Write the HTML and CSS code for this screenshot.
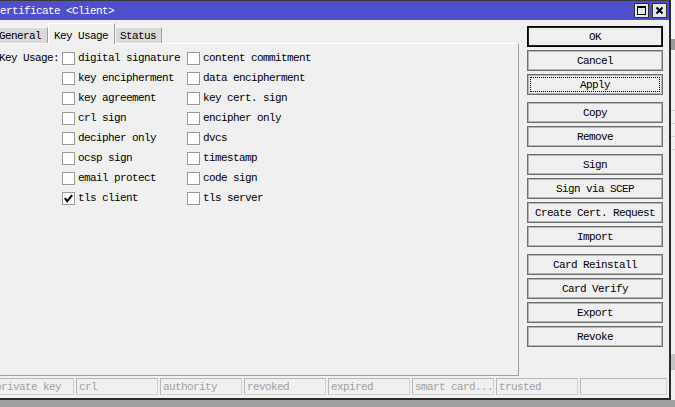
FILE: index.html
```html
<!DOCTYPE html>
<html>
<head>
<meta charset="utf-8">
<link rel="stylesheet" href="styles.css">
</head>
<body>
<div class="screen">
  <div class="top">
    <div class="window">
      <div class="titlebar">
        <span class="title">Certificate &lt;Client&gt;</span>
        <div class="tbtns">
          <span class="tbtn"><svg width="13" height="13" viewBox="0 0 13 13"><rect x="2.5" y="2.5" width="8" height="8" fill="none" stroke="#000" stroke-width="1"/><rect x="2" y="2" width="9" height="2" fill="#000"/></svg></span>
          <span class="tbtn"><svg width="13" height="13" viewBox="0 0 13 13"><path d="M3.5 3.5 L9.5 9.5 M9.5 3.5 L3.5 9.5" stroke="#000" stroke-width="2" fill="none"/></svg></span>
        </div>
      </div>
      <div class="wbody">
        <div class="main">
          <div class="left">
            <div class="tabs">
              <div class="tab tab-general">General</div>
              <div class="tab tab-key active">Key Usage</div>
              <div class="tab tab-status">Status</div>
            </div>
            <div class="panel">
              <div class="grid">
                <span class="lbl">Key Usage:</span>
                <label class="cb c1"><span class="box"></span>digital signature</label>
                <label class="cb c2"><span class="box"></span>content commitment</label>
                <label class="cb c1"><span class="box"></span>key encipherment</label>
                <label class="cb c2"><span class="box"></span>data encipherment</label>
                <label class="cb c1"><span class="box"></span>key agreement</label>
                <label class="cb c2"><span class="box"></span>key cert. sign</label>
                <label class="cb c1"><span class="box"></span>crl sign</label>
                <label class="cb c2"><span class="box"></span>encipher only</label>
                <label class="cb c1"><span class="box"></span>decipher only</label>
                <label class="cb c2"><span class="box"></span>dvcs</label>
                <label class="cb c1"><span class="box"></span>ocsp sign</label>
                <label class="cb c2"><span class="box"></span>timestamp</label>
                <label class="cb c1"><span class="box"></span>email protect</label>
                <label class="cb c2"><span class="box"></span>code sign</label>
                <label class="cb c1"><span class="box"><svg width="11" height="11" viewBox="0 0 11 11"><path d="M1.8 5.2 L4.2 8.2 L9.2 2.2" stroke="#000" stroke-width="2" fill="none"/></svg></span>tls client</label>
                <label class="cb c2"><span class="box"></span>tls server</label>
              </div>
            </div>
          </div>
          <div class="buttons">
            <div class="btn default">OK</div>
            <div class="btn">Cancel</div>
            <div class="btn focus">Apply</div>
            <div class="btn sep">Copy</div>
            <div class="btn">Remove</div>
            <div class="btn sep">Sign</div>
            <div class="btn">Sign via SCEP</div>
            <div class="btn">Create Cert. Request</div>
            <div class="btn">Import</div>
            <div class="btn sep">Card Reinstall</div>
            <div class="btn">Card Verify</div>
            <div class="btn">Export</div>
            <div class="btn">Revoke</div>
          </div>
        </div>
        <div class="status">
          <div class="sbox">private key</div>
          <div class="sbox">crl</div>
          <div class="sbox">authority</div>
          <div class="sbox">revoked</div>
          <div class="sbox">expired</div>
          <div class="sbox">smart card...</div>
          <div class="sbox">trusted</div>
          <div class="sbox last"></div>
        </div>
      </div>
    </div>
    <div class="behind">
      <div class="b-top"></div>
      <div class="b-head"></div>
      <div class="b-rows">
        <div class="b-row"></div>
        <div class="b-row"></div>
        <div class="b-row"></div>
        <div class="b-row"></div>
      </div>
      <div class="b-fill"></div>
      <div class="b-bar"></div>
      <div class="b-end"></div>
    </div>
  </div>
  <div class="bottom"></div>
</div>
</body>
</html>
```

FILE: styles.css
```css
html, body {
  margin: 0;
  padding: 0;
  background: #a0a0a0;
}

.screen {
  width: 675px;
  height: 407px;
  overflow: hidden;
  font-family: "Liberation Mono", "DejaVu Sans Mono", monospace;
  font-size: 11px;
  letter-spacing: -0.6px;
  color: #000;
}

.top {
  display: flex;
  height: 400px;
}

.window {
  flex: none;
  margin-left: -10px;
  width: 681px;
  height: 400px;
  box-sizing: border-box;
  border-top: 1px solid #3a3a3a;
  border-right: 2px solid #2a2a2a;
  border-bottom: 2px solid #2a2a2a;
  background: #f0f0f0;
  display: flex;
  flex-direction: column;
}

.titlebar {
  height: 19px;
  flex: none;
  background: #4f4fcd;
  display: flex;
  align-items: center;
  justify-content: space-between;
  padding: 0 2px 0 4px;
}

.title {
  color: #fff;
  white-space: pre;
}

.tbtns {
  display: flex;
  gap: 3px;
}

.tbtn {
  width: 15px;
  height: 15px;
  box-sizing: border-box;
  border: 1px solid #303030;
  background: #e6e6e6;
  display: flex;
  align-items: center;
  justify-content: center;
}

.tbtn svg {
  display: block;
}

.wbody {
  flex: 1;
  display: flex;
  flex-direction: column;
}

.main {
  display: flex;
  height: 356px;
}

.left {
  width: 529px;
  flex: none;
  display: flex;
  flex-direction: column;
}

.tabs {
  height: 23px;
  flex: none;
  display: flex;
  align-items: flex-end;
  padding-left: 4px;
}

.tab {
  height: 16px;
  box-sizing: border-box;
  background: #d9d9d9;
  border-top: 1px solid #f4f4f4;
  border-left: 1px solid #f4f4f4;
  border-right: 1px solid #a0a0a0;
  padding-left: 4px;
  display: flex;
  align-items: center;
  white-space: pre;
}

.tab-general { width: 54px; }
.tab-key { width: 67px; padding-left: 5px; }
.tab-status { width: 47px; padding-left: 4px; }

.tab.active {
  height: 21px;
  margin-bottom: -1px;
  background: #f0f0f0;
  border-top: 1px solid #ffffff;
  border-left: 1px solid #ffffff;
  border-right: 1px solid #a0a0a0;
  padding-top: 3px;
  position: relative;
  z-index: 1;
}

.panel {
  flex: 1;
  box-sizing: border-box;
  border-top: 1px solid #ffffff;
  border-right: 1px solid #a0a0a0;
  border-bottom: 1px solid #a0a0a0;
  padding-top: 4px;
}

.grid {
  display: grid;
  grid-template-columns: 72px 125px auto;
  grid-auto-rows: 20px;
}

.lbl {
  grid-column: 1;
  display: flex;
  align-items: center;
  justify-content: flex-end;
  padding-right: 3px;
  white-space: pre;
}

.c1 { grid-column: 2; }
.c2 { grid-column: 3; }

.cb {
  display: flex;
  align-items: center;
  white-space: pre;
}

.box {
  width: 13px;
  height: 13px;
  box-sizing: border-box;
  border: 1px solid #9a9a9a;
  background: #fff;
  margin-right: 3px;
  flex: none;
  display: flex;
  align-items: center;
  justify-content: center;
}

.box svg {
  display: block;
}

.buttons {
  width: 136px;
  flex: none;
  margin-left: 8px;
  padding-top: 6px;
  display: flex;
  flex-direction: column;
}

.btn {
  height: 21px;
  box-sizing: border-box;
  margin-bottom: 3px;
  border: 1px solid #6e6e6e;
  box-shadow: inset 0 0 0 1px #b4b4b4;
  background: #f0f0f0;
  display: flex;
  align-items: center;
  justify-content: center;
  white-space: pre;
}

.btn.default {
  border-color: #000;
  box-shadow: inset 0 0 0 1px #222;
}

.btn.focus {
  outline: 1px dotted #000;
  outline-offset: -4px;
}

.btn.sep {
  margin-top: 4px;
}

.status {
  margin-top: 2px;
  height: 17px;
  display: flex;
  gap: 2px;
  padding: 0 2px;
}

.sbox {
  width: 82px;
  flex: none;
  box-sizing: border-box;
  border: 1px solid #d2d2d2;
  border-top-color: #b8b8b8;
  border-left-color: #b8b8b8;
  color: #a0a0a0;
  padding-left: 2px;
  display: flex;
  align-items: center;
  white-space: pre;
}

.sbox.last {
  flex: 1;
}

.behind {
  flex: 1;
  display: flex;
  flex-direction: column;
  background: #f0f0f0;
}

.b-top { height: 39px; background: #f4f4f4; }
.b-head { height: 11px; background: #9a9a9a; }
.b-rows {
  display: flex;
  flex-direction: column;
  padding-top: 60px;
  gap: 12px;
}
.b-row { height: 1px; background: #d0d0d0; }
.b-fill { flex: 1; }
.b-bar { height: 15px; background: #c4c4c4; }
.b-end { height: 30px; background: #f0f0f0; border-top: 1px solid #c0c0c0; }

.bottom {
  height: 7px;
  background: #a0a0a0;
}
```
